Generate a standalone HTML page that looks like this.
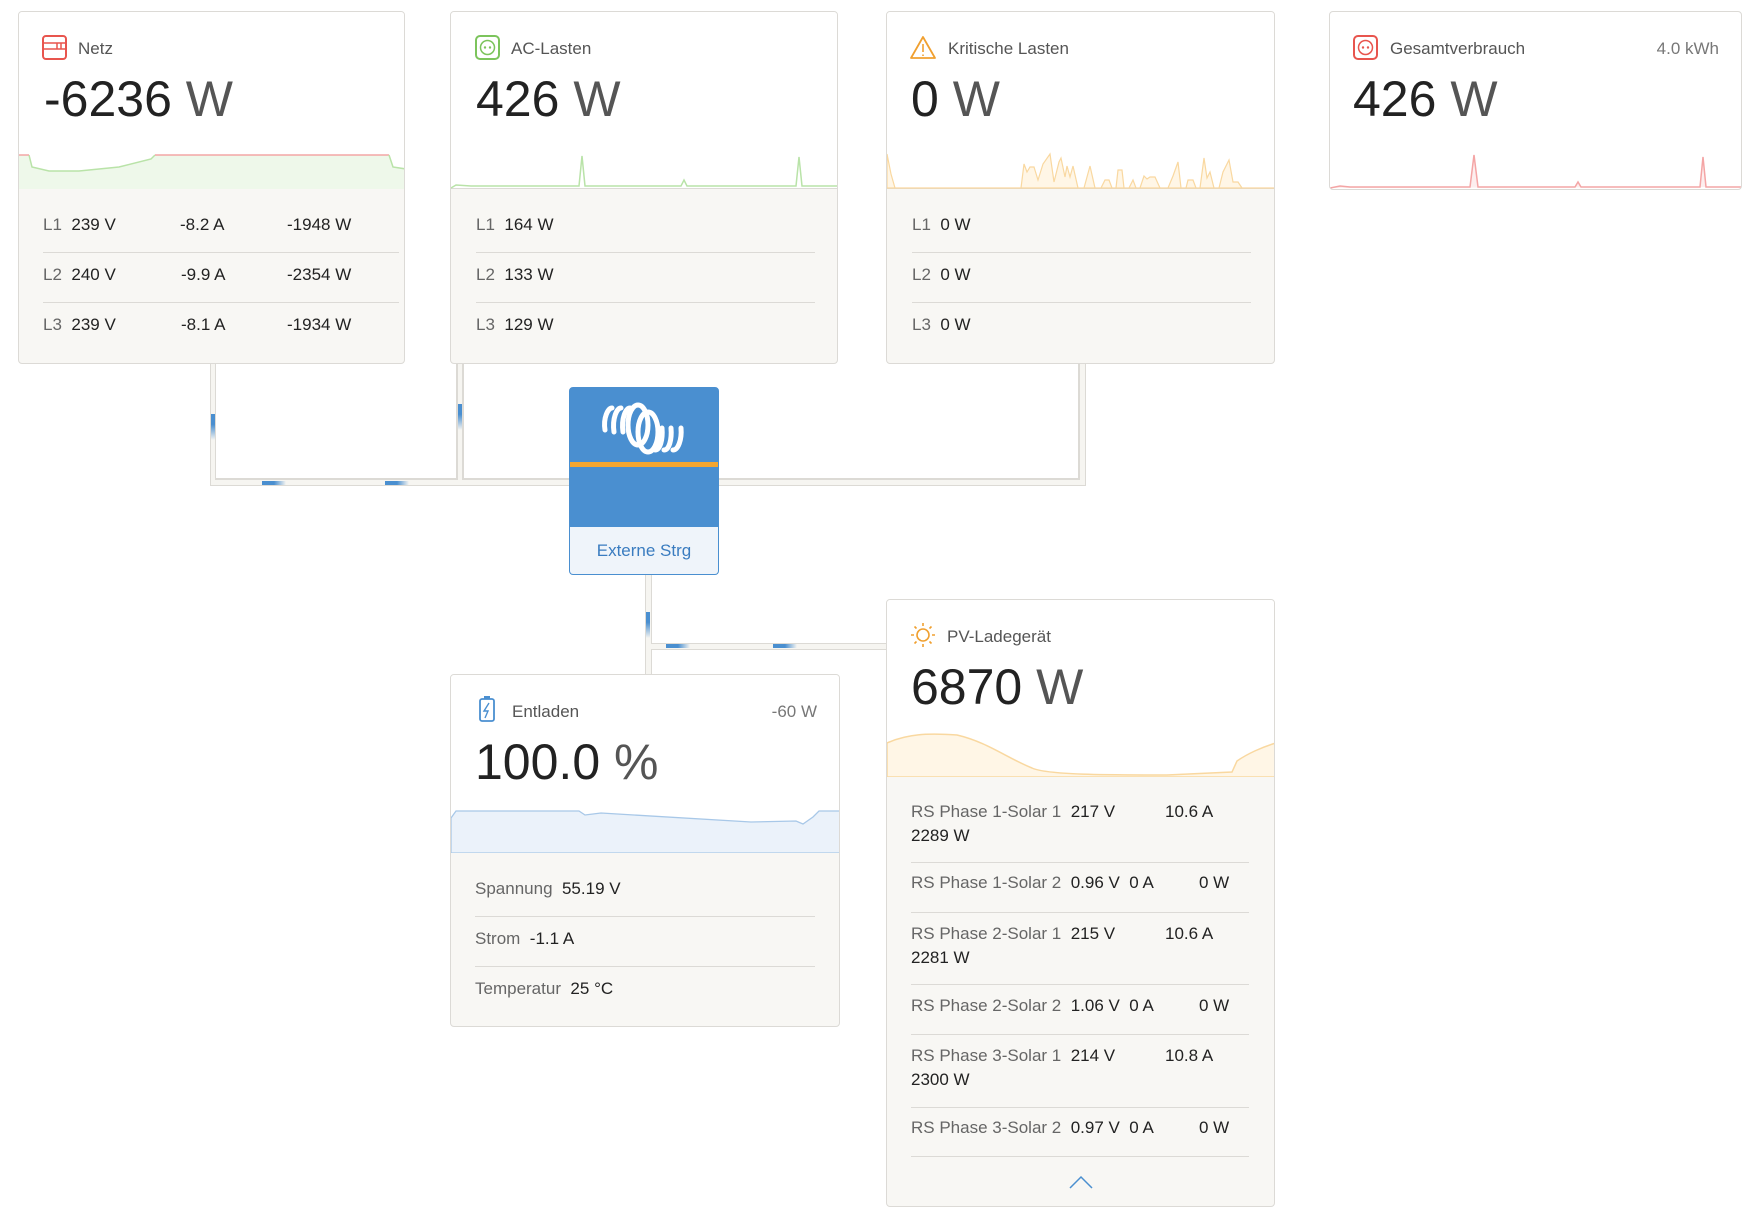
<!DOCTYPE html>
<html><head><meta charset="utf-8"><style>
*{margin:0;padding:0;box-sizing:border-box}
body{width:1747px;height:1212px;background:#fff;position:relative;overflow:hidden;font-family:"Liberation Sans",sans-serif;color:#222}
.card{position:absolute;border:1px solid #dcdad6;border-radius:4px;background:#f8f7f4;overflow:hidden}
.top{position:absolute;left:0;right:0;top:0;background:#fff;border-bottom:1px solid #dcdad6}
.t{position:absolute;font-size:17px;color:#555}
.big{position:absolute;font-size:50px;color:#222;letter-spacing:0}
.big span{color:#555}
.r{position:absolute;font-size:17px;color:#222;white-space:nowrap}
.r i{font-style:normal;color:#666}
.sep{position:absolute;height:1px;background:#dcdad6}
.ch{position:absolute;background:#f6f5f1;border:1px solid #dcdad5}
.bl{position:absolute;background:linear-gradient(90deg,#4a8fd0,#4a8fd0 50%,rgba(74,143,208,0))}
.bv{position:absolute;background:linear-gradient(180deg,#4a8fd0,#4a8fd0 40%,rgba(74,143,208,0))}
svg{position:absolute}
</style></head><body>

<div class="ch" style="left:210px;top:360px;width:6px;height:126px"></div>
<div class="ch" style="left:210px;top:479px;width:876px;height:7px"></div>
<div class="ch" style="left:457px;top:360px;width:6px;height:121px"></div>
<div class="ch" style="left:1079px;top:360px;width:7px;height:126px"></div>
<div style="position:absolute;left:211px;top:360px;width:4px;height:125px;background:#f6f5f1"></div>
<div style="position:absolute;left:211px;top:480px;width:874px;height:5px;background:#f6f5f1"></div>
<div style="position:absolute;left:216px;top:364px;width:241px;height:115px;background:#fff;border-right:1px solid #dcdad5;border-bottom:1px solid #dcdad5"></div>
<div style="position:absolute;left:463px;top:364px;width:616px;height:115px;background:#fff;border-left:1px solid #dcdad5;border-bottom:1px solid #dcdad5;border-right:1px solid #dcdad5"></div>
<div class="bv" style="left:211px;top:414px;width:4px;height:26px"></div>
<div class="bv" style="left:458px;top:404px;width:4px;height:26px"></div>
<div class="bl" style="left:262px;top:481px;width:24px;height:4px"></div>
<div class="bl" style="left:385px;top:481px;width:24px;height:4px"></div>

<div class="ch" style="left:645px;top:570px;width:7px;height:110px"></div>
<div class="ch" style="left:645px;top:643px;width:245px;height:7px"></div>
<div style="position:absolute;left:646px;top:570px;width:5px;height:108px;background:#f6f5f1"></div>
<div style="position:absolute;left:646px;top:644px;width:243px;height:5px;background:#f6f5f1"></div>
<div class="bv" style="left:646px;top:612px;width:4px;height:26px"></div>
<div class="bl" style="left:666px;top:644px;width:24px;height:4px"></div>
<div class="bl" style="left:773px;top:644px;width:24px;height:4px"></div>

<div class="card" style="left:18px;top:11px;width:387px;height:353px">
 <div class="top" style="height:177px">
  <svg style="left:0;top:0" width="387" height="177">
   <path d="M0 143 L10 143 L13 155 L30 159 L60 159 L100 155 L132 147 L136 143 L370 143 L374 155 L387 157 L387 177 L0 177Z" fill="#eef8ea"/>
   <path d="M10 143 L13 155 L30 159 L60 159 L100 155 L132 147 L136 143" fill="none" stroke="#b9e3a8" stroke-width="1.5"/>
   <path d="M0 143 L10 143 M136 143 L370 143" stroke="#f4a5a5" stroke-width="1.5"/>
   <path d="M370 143 L374 155 L387 157" fill="none" stroke="#b9e3a8" stroke-width="1.5"/>
   <rect x="24" y="24" width="23" height="23" rx="3" fill="none" stroke="#e8554e" stroke-width="2"/>
   <path d="M24 31 H47 M24 37 H47 M38 31 V37 M42 31 V37" stroke="#e8554e" stroke-width="1.5"/>
  </svg>
  <div class="t" style="left:59px;top:27px">Netz</div>
  <div class="big" style="left:25px;top:58px">-6236 <span>W</span></div>
 </div>
 <div class="r" style="left:24px;top:203px"><i>L1</i>&nbsp; 239 V</div><div class="r" style="left:161px;top:203px">-8.2 A</div><div class="r" style="left:268px;top:203px">-1948 W</div>
 <div class="sep" style="left:24px;width:356px;top:240px"></div>
 <div class="r" style="left:24px;top:253px"><i>L2</i>&nbsp; 240 V</div><div class="r" style="left:162px;top:253px">-9.9 A</div><div class="r" style="left:268px;top:253px">-2354 W</div>
 <div class="sep" style="left:24px;width:356px;top:290px"></div>
 <div class="r" style="left:24px;top:303px"><i>L3</i>&nbsp; 239 V</div><div class="r" style="left:162px;top:303px">-8.1 A</div><div class="r" style="left:268px;top:303px">-1934 W</div>
</div>

<div class="card" style="left:450px;top:11px;width:388px;height:353px">
 <div class="top" style="height:177px">
  <svg style="left:0;top:0" width="388" height="177">
   <path d="M0 176 L5 173 L20 174 L128 174 L131 144 L134 174 L230 174 L233 168 L236 174 L345 174 L348 145 L351 174 L388 174" fill="none" stroke="#b9e3a8" stroke-width="1.5"/>
   <rect x="25" y="24" width="23" height="23" rx="4" fill="none" stroke="#7cc45c" stroke-width="2"/>
   <circle cx="36.5" cy="35.5" r="7" fill="none" stroke="#7cc45c" stroke-width="1.5"/>
   <circle cx="34" cy="35.5" r="1.2" fill="#7cc45c"/><circle cx="39" cy="35.5" r="1.2" fill="#7cc45c"/>
  </svg>
  <div class="t" style="left:60px;top:27px">AC-Lasten</div>
  <div class="big" style="left:25px;top:58px">426 <span>W</span></div>
 </div>
 <div class="r" style="left:25px;top:203px"><i>L1</i>&nbsp; 164 W</div>
 <div class="sep" style="left:25px;width:339px;top:240px"></div>
 <div class="r" style="left:25px;top:253px"><i>L2</i>&nbsp; 133 W</div>
 <div class="sep" style="left:25px;width:339px;top:290px"></div>
 <div class="r" style="left:25px;top:303px"><i>L3</i>&nbsp; 129 W</div>
</div>

<div class="card" style="left:886px;top:11px;width:389px;height:353px">
 <div class="top" style="height:177px">
  <svg style="left:0;top:0" width="389" height="177">
   <path d="M0 176 L0 142 L4 162 L8 176 L134 176 L137 152 L140 160 L143 155 L147 155 L151 168 L156 152 L163 142 L167 170 L172 150 L174 146 L178 165 L180 154 L183 165 L186 154 L191 176 L197 176 L203 154 L208 176 L214 176 L218 168 L222 168 L225 176 L229 176 L231 158 L235 158 L237 176 L242 176 L246 168 L249 176 L253 176 L257 164 L260 167 L263 165 L268 165 L273 176 L281 176 L286 164 L291 150 L294 176 L299 176 L301 168 L306 168 L309 176 L313 176 L317 146 L320 166 L323 160 L327 176 L332 176 L336 160 L342 148 L346 170 L351 170 L355 176 L389 176 Z" fill="#fff6e6" stroke="#f9d8a0" stroke-width="1.2"/>
   <path d="M36 25 L48 46 L24 46 Z" fill="none" stroke="#f0a030" stroke-width="1.8" stroke-linejoin="round"/>
   <path d="M36 32 V40 M36 42.5 V44" stroke="#f0a030" stroke-width="1.6"/>
  </svg>
  <div class="t" style="left:61px;top:27px">Kritische Lasten</div>
  <div class="big" style="left:24px;top:58px">0 <span>W</span></div>
 </div>
 <div class="r" style="left:25px;top:203px"><i>L1</i>&nbsp; 0 W</div>
 <div class="sep" style="left:25px;width:339px;top:240px"></div>
 <div class="r" style="left:25px;top:253px"><i>L2</i>&nbsp; 0 W</div>
 <div class="sep" style="left:25px;width:339px;top:290px"></div>
 <div class="r" style="left:25px;top:303px"><i>L3</i>&nbsp; 0 W</div>
</div>

<div class="card" style="left:1329px;top:11px;width:413px;height:179px;background:#fff">
  <svg style="left:0;top:0" width="413" height="179">
   <path d="M0 176 L10 174 L20 175 L140 175 L144 143 L148 175 L245 175 L248 170 L251 175 L370 175 L373 145 L376 175 L413 175" fill="#fdeeee" stroke="#f4a5a5" stroke-width="1.5"/>
   <rect x="24" y="24" width="23" height="23" rx="4" fill="none" stroke="#e8554e" stroke-width="2"/>
   <circle cx="35.5" cy="35.5" r="7" fill="none" stroke="#e8554e" stroke-width="1.5"/>
   <circle cx="33" cy="35.5" r="1.2" fill="#e8554e"/><circle cx="38" cy="35.5" r="1.2" fill="#e8554e"/>
  </svg>
  <div class="t" style="left:60px;top:27px">Gesamtverbrauch</div>
  <div class="t" style="right:22px;top:27px;color:#777">4.0 kWh</div>
  <div class="big" style="left:23px;top:58px">426 <span>W</span></div>
</div>

<div style="position:absolute;left:569px;top:387px;width:150px;height:188px;border-radius:4px;border:1px solid #4a8fd0;overflow:hidden;background:#4a8fd0">
 <div style="position:absolute;left:0;top:74px;width:100%;height:5px;background:#f5a630"></div>
 <div style="position:absolute;left:0;top:139px;width:100%;bottom:0;background:#eff4fa;color:#3a7cc0;font-size:17px;text-align:center;line-height:47px">Externe Strg</div>
 <svg style="left:30px;top:12px" width="90" height="56" viewBox="0 0 90 56">
  <g fill="none" stroke="#fff" stroke-width="5" stroke-linecap="round">
   <path d="M5 30 C3 18 8 8 12 8"/>
   <path d="M14 32 C12 18 17 8 21 8"/>
   <path d="M23 32 C21 18 26 8 30 8"/>
   <ellipse cx="38" cy="25" rx="10" ry="20"/>
   <ellipse cx="48" cy="32" rx="10" ry="20"/>
   <path d="M55 50 C60 50 63 40 62 28"/>
   <path d="M64 50 C69 50 72 40 71 28"/>
   <path d="M73 50 C78 50 82 40 81 28"/>
  </g>
 </svg>
</div>

<div class="card" style="left:450px;top:674px;width:390px;height:353px">
 <div class="top" style="height:178px">
  <svg style="left:0;top:0" width="390" height="178">
   <path d="M0 143 L5 136 L128 136 L134 140 L150 138 L300 147 L345 146 L352 149 L362 142 L368 136 L390 136 L390 178 L0 178Z" fill="#ebf2fa" stroke="#a8c8e8" stroke-width="1.3"/>
   <rect x="29" y="24" width="14" height="22" rx="2" fill="none" stroke="#4a8fd0" stroke-width="1.8"/>
   <rect x="33" y="21" width="6" height="3" fill="#4a8fd0"/>
   <path d="M38 28 L33 36 L37 36 L34 43" fill="none" stroke="#4a8fd0" stroke-width="1.4"/>
  </svg>
  <div class="t" style="left:61px;top:27px">Entladen</div>
  <div class="t" style="right:22px;top:27px;color:#777">-60 W</div>
  <div class="big" style="left:24px;top:58px">100.0 <span>%</span></div>
 </div>
 <div class="r" style="left:24px;top:204px"><i>Spannung</i>&nbsp; 55.19 V</div>
 <div class="sep" style="left:24px;width:340px;top:241px"></div>
 <div class="r" style="left:24px;top:254px"><i>Strom</i>&nbsp; -1.1 A</div>
 <div class="sep" style="left:24px;width:340px;top:291px"></div>
 <div class="r" style="left:24px;top:304px"><i>Temperatur</i>&nbsp; 25 °C</div>
</div>

<div class="card" style="left:886px;top:599px;width:389px;height:608px">
 <div class="top" style="height:177px">
  <svg style="left:0;top:0" width="389" height="177">
   <path d="M0 143 C20 134 40 133 70 135 C100 142 120 158 145 168 C160 175 220 175 280 175 L345 172 L350 161 C360 154 375 147 389 143 L389 177 L0 177Z" fill="#fff6e6" stroke="#f9d8a0" stroke-width="1.5"/>
   <circle cx="36" cy="35" r="6" fill="none" stroke="#f0a030" stroke-width="1.6"/>
   <g stroke="#f0a030" stroke-width="1.6"><path d="M36 23v3M36 44v3M24 35h3M45 35h3M27.5 26.5l2 2M42.5 41.5l2 2M27.5 43.5l2-2M42.5 28.5l2-2"/></g>
  </svg>
  <div class="t" style="left:60px;top:27px">PV-Ladegerät</div>
  <div class="big" style="left:24px;top:58px">6870 <span>W</span></div>
 </div>
 <div class="r" style="left:24px;top:202px"><i>RS Phase 1-Solar 1</i>&nbsp; 217 V</div><div class="r" style="left:278px;top:202px">10.6 A</div>
 <div class="r" style="left:24px;top:226px">2289 W</div>
 <div class="sep" style="left:24px;width:338px;top:262px"></div>
 <div class="r" style="left:24px;top:273px"><i>RS Phase 1-Solar 2</i>&nbsp; 0.96 V&nbsp; 0 A</div><div class="r" style="left:312px;top:273px">0 W</div>
 <div class="sep" style="left:24px;width:338px;top:312px"></div>
 <div class="r" style="left:24px;top:324px"><i>RS Phase 2-Solar 1</i>&nbsp; 215 V</div><div class="r" style="left:278px;top:324px">10.6 A</div>
 <div class="r" style="left:24px;top:348px">2281 W</div>
 <div class="sep" style="left:24px;width:338px;top:384px"></div>
 <div class="r" style="left:24px;top:396px"><i>RS Phase 2-Solar 2</i>&nbsp; 1.06 V&nbsp; 0 A</div><div class="r" style="left:312px;top:396px">0 W</div>
 <div class="sep" style="left:24px;width:338px;top:434px"></div>
 <div class="r" style="left:24px;top:446px"><i>RS Phase 3-Solar 1</i>&nbsp; 214 V</div><div class="r" style="left:278px;top:446px">10.8 A</div>
 <div class="r" style="left:24px;top:470px">2300 W</div>
 <div class="sep" style="left:24px;width:338px;top:507px"></div>
 <div class="r" style="left:24px;top:518px"><i>RS Phase 3-Solar 2</i>&nbsp; 0.97 V&nbsp; 0 A</div><div class="r" style="left:312px;top:518px">0 W</div>
 <div class="sep" style="left:24px;width:338px;top:556px"></div>
 <svg style="left:181px;top:574px" width="26" height="16"><path d="M2 14 L13 3 L24 14" fill="none" stroke="#4a8fd0" stroke-width="1.5"/></svg>
</div>
</body></html>
